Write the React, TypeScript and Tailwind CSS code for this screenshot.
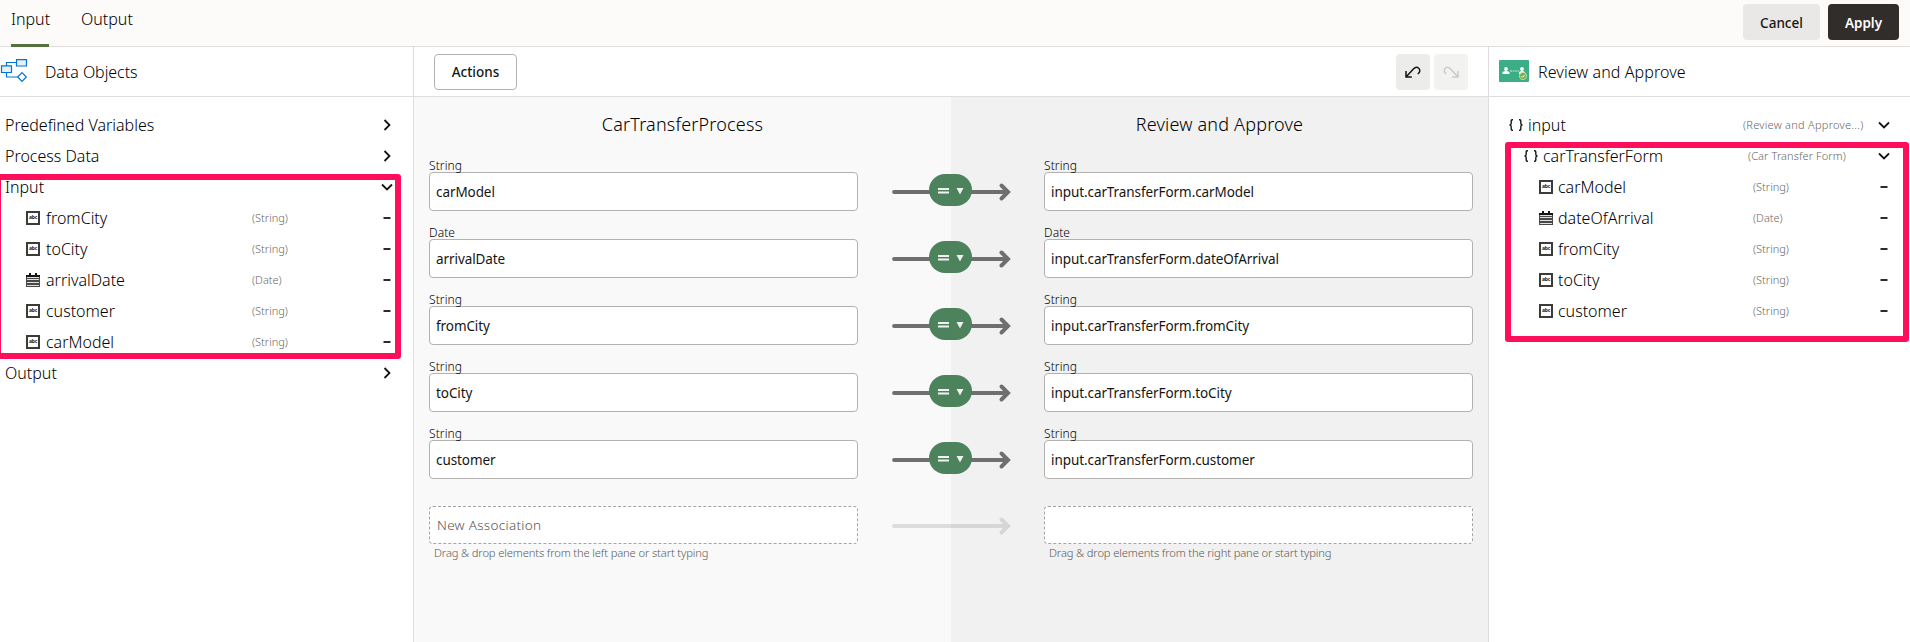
import React from "react";

type Kind = "text" | "date" | "object" | "none";
type Row = { name: string; type?: string; kind: Kind; state: "open" | "closed" | "leaf" };

const leftRows: Row[] = [
  { name: "Predefined Variables", kind: "none", state: "closed" },
  { name: "Process Data", kind: "none", state: "closed" },
  { name: "Input", kind: "none", state: "open" },
  { name: "fromCity", type: "(String)", kind: "text", state: "leaf" },
  { name: "toCity", type: "(String)", kind: "text", state: "leaf" },
  { name: "arrivalDate", type: "(Date)", kind: "date", state: "leaf" },
  { name: "customer", type: "(String)", kind: "text", state: "leaf" },
  { name: "carModel", type: "(String)", kind: "text", state: "leaf" },
  { name: "Output", kind: "none", state: "closed" },
];

const rightRows: (Row & { indent: string; typeWidth: string })[] = [
  { name: "input", type: "(Review and Approve...)", kind: "object", state: "open", indent: "pl-[20px]", typeWidth: "w-[134px] tracking-[0.26px]" },
  { name: "carTransferForm", type: "(Car Transfer Form)", kind: "object", state: "open", indent: "pl-[35px]", typeWidth: "w-[129px] tracking-[0.1px]" },
  { name: "carModel", type: "(String)", kind: "text", state: "leaf", indent: "pl-[50px]", typeWidth: "w-[124px]" },
  { name: "dateOfArrival", type: "(Date)", kind: "date", state: "leaf", indent: "pl-[50px]", typeWidth: "w-[124px]" },
  { name: "fromCity", type: "(String)", kind: "text", state: "leaf", indent: "pl-[50px]", typeWidth: "w-[124px]" },
  { name: "toCity", type: "(String)", kind: "text", state: "leaf", indent: "pl-[50px]", typeWidth: "w-[124px]" },
  { name: "customer", type: "(String)", kind: "text", state: "leaf", indent: "pl-[50px]", typeWidth: "w-[124px]" },
];

const associations = [
  { type: "String", from: "carModel", to: "input.carTransferForm.carModel" },
  { type: "Date", from: "arrivalDate", to: "input.carTransferForm.dateOfArrival" },
  { type: "String", from: "fromCity", to: "input.carTransferForm.fromCity" },
  { type: "String", from: "toCity", to: "input.carTransferForm.toCity" },
  { type: "String", from: "customer", to: "input.carTransferForm.customer" },
];

function StateIcon({ state }: { state: Row["state"] }) {
  return (
    <svg width="14" height="14" viewBox="0 0 14 14" fill="none" stroke="#161513" strokeWidth="1.8" className="shrink-0">
      {state === "open" && <path d="M2 4.5 7 9.5 12 4.5" />}
      {state === "closed" && <path d="M4.5 2 9.5 7 4.5 12" />}
      {state === "leaf" && <path d="M3.5 7H10.5" />}
    </svg>
  );
}

function KindIcon({ kind }: { kind: Kind }) {
  if (kind === "text")
    return (
      <span className="flex h-[14px] w-[14px] shrink-0 items-center justify-center border-2 border-[#3d3b39] bg-white">
        <span className="text-[5px] leading-[5px] font-bold tracking-[-0.2px] text-[#161513]">abc</span>
      </span>
    );
  if (kind === "date")
    return (
      <svg width="14" height="14" viewBox="0 0 14 14" className="shrink-0">
        <path d="M0 2H14V14H0Z" fill="#4a4846" />
        <path d="M0 2H14V4H0ZM3 0H5V3.5H3ZM9 0H11V3.5H9Z" fill="#161513" />
        <path d="M1 4.5H13M1 6.5H13M1 9.5H13M1 12.5H13" stroke="#e0e0e0" strokeWidth="1" />
      </svg>
    );
  if (kind === "object")
    return (
      <svg width="14" height="14" viewBox="0 0 14 14" fill="none" stroke="#161513" strokeWidth="1.4" className="shrink-0">
        <path d="M4 1.7H3.3Q2.2 1.7 2.2 2.9V5.2Q2.2 7 .5 7 2.2 7 2.2 8.8V11.1Q2.2 12.3 3.3 12.3H4M10 1.7H10.7Q11.8 1.7 11.8 2.9V5.2Q11.8 7 13.5 7 11.8 7 11.8 8.8V11.1Q11.8 12.3 10.7 12.3H10" />
      </svg>
    );
  return null;
}

function Arrow({ active }: { active: boolean }) {
  return (
    <div className={active ? "relative h-[32px] w-[118px]" : "relative h-[32px] w-[118px] opacity-20"}>
      <svg width="120" height="32" viewBox="0 0 120 32" fill="none" stroke="#6f6f6f" strokeWidth="4" strokeLinecap="round">
        <path d="M2 18H115" strokeWidth="3.8" />
        <path d="M109.5 11.5 116 18 109.5 24.5" />
      </svg>
      {active && (
        <button className="absolute top-0 left-[37px] h-[32px] w-[43px] rounded-[16px] bg-[#4c825c]">
          <svg width="43" height="32" viewBox="0 0 43 32" fill="#f1f1f1">
            <path d="M9 14H20V16H9ZM9 17.5H20V19.5H9ZM27.5 14H34.5L31 20.5Z" />
          </svg>
        </button>
      )}
    </div>
  );
}

function Field({ label, value }: { label: string; value: string }) {
  return (
    <div className="w-[429px]">
      <div className="h-[13px] text-[12px] leading-[13px] font-light tracking-[0.1px] text-black">{label}</div>
      <div className="flex h-[39px] items-center rounded-[4px] border border-[#b3b2b1] bg-white pt-[2px] pl-[6px] text-[13.5px] tracking-[-0.08px] text-[#161513]">
        {value}
      </div>
    </div>
  );
}

function NewField({ value, hint }: { value: string; hint: string }) {
  return (
    <div className="w-[429px]">
      <div className="flex h-[38px] items-center rounded-[4px] border border-dashed border-[#a5a4a3] bg-white pl-[7px] text-[13.5px] font-light tracking-[0.3px] text-[#555453]">
        {value}
      </div>
      <div className="pt-[1px] pl-[5px] text-[11.2px] leading-[15px] font-light tracking-[-0.13px] text-[#5a5958]">{hint}</div>
    </div>
  );
}

export default function App() {
  return (
    <div className="relative flex h-[642px] w-[1910px] flex-col overflow-hidden bg-white font-['Noto_Sans',sans-serif] text-[#161513]">
      <header className="flex h-[47px] justify-between border-b border-[#dfdedd] bg-[#fcfbfa] pl-[11px]">
        <nav className="flex gap-[32px] text-[16px] font-light text-black">
          <div className="-mb-px flex h-[47px] w-[38px] flex-col justify-between border-b-[3px] border-[#52713f] pt-[7px] whitespace-nowrap">Input</div>
          <div className="pt-[7px]">Output</div>
        </nav>
        <div className="flex gap-[8px] pt-[4px] pr-[11px] text-[13.5px] font-semibold">
          <button className="h-[36px] w-[77px] rounded-[4px] bg-[#e9e8e6] pt-[2px] font-medium">Cancel</button>
          <button className="h-[36px] w-[71px] rounded-[4px] bg-[#312d2a] pt-[2px] text-white">Apply</button>
        </div>
      </header>

      <div className="flex flex-1">
        <aside className="flex w-[414px] flex-col border-r border-[#dfdedd]">
          <div className="flex h-[50px] items-center border-b border-[#dfdedd] text-[16px] font-light tracking-[-0.05px] text-black">
            <svg width="28" height="25" viewBox="0 0 28 25" fill="#e5f1fa" stroke="#0572ce" strokeWidth="1.2">
              <path d="M6.5 6.5V3.5H16.5M6.5 13.5V18H17.5" fill="none" />
              <path d="M16.5 .6H26.5V7H16.5ZM1.5 6.8H11.5V13.5H1.5Z" />
              <path d="M22 13.7 26.3 18 22 22.3 17.7 18Z" fill="white" />
            </svg>
            <span className="ml-[17px]">Data Objects</span>
          </div>
          <div className="flex flex-col pt-[12px]">
            {leftRows.map((r) => (
              <div key={r.name} className={r.kind === "none" ? "flex h-[31px] items-center pr-[19px] pl-[5px]" : "flex h-[31px] items-center pr-[19px] pl-[26px]"}>
                <KindIcon kind={r.kind} />
                <span className={r.kind === "none" ? "flex-1 text-[16px] font-light text-black" : "ml-[6px] flex-1 text-[16px] font-light text-black"}>{r.name}</span>
                <span className="w-[128px] pt-[2px] text-[11px] font-light text-[#686765]">{r.type}</span>
                <StateIcon state={r.state} />
              </div>
            ))}
          </div>
        </aside>

        <main className="flex flex-1 flex-col">
          <div className="flex h-[50px] items-center justify-between border-b border-[#dfdedd] px-[20px]">
            <button className="h-[36px] w-[83px] rounded-[4px] border border-[#b3b2b1] pt-[2px] text-[13.5px] font-medium">Actions</button>
            <div className="flex gap-[4px]">
              <button className="flex h-[36px] w-[34px] items-center justify-center rounded-[4px] bg-[#ececea]">
                <svg width="16" height="12" viewBox="0 0 16 12" fill="none" stroke="#161513" strokeWidth="1.5">
                  <path d="M1 5V11H6.8M1 11 8.4 3.1C10.2 1.1 12.2.9 13.7 2.2 15.2 3.6 15 5.8 13.8 7L12.8 8" />
                </svg>
              </button>
              <button className="flex h-[36px] w-[34px] items-center justify-center rounded-[4px] bg-[#f2f2f1]">
                <svg width="16" height="12" viewBox="0 0 16 12" fill="none" stroke="#cbcac9" strokeWidth="1.5">
                  <path d="M15 5V11H9.2M15 11 7.6 3.1C5.8 1.1 3.8.9 2.3 2.2.8 3.6 1 5.8 2.2 7L3.2 8" />
                </svg>
              </button>
            </div>
          </div>
          <div className="flex flex-1 flex-col bg-[linear-gradient(to_right,#f9f9f9_50%,#f1f1f1_50%)]">
            <div className="flex h-[62px] text-center text-[18px] font-light tracking-[0.18px] text-black">
              <h2 className="flex-1 pt-[14px]">CarTransferProcess</h2>
              <h2 className="flex-1 pt-[14px]">Review and Approve</h2>
            </div>
            <div className="flex flex-col gap-[15px] px-[15px]">
              {associations.map((a) => (
                <div key={a.from} className="flex items-start justify-between">
                  <Field label={a.type} value={a.from} />
                  <div className="pt-[15px]"><Arrow active /></div>
                  <Field label={a.type} value={a.to} />
                </div>
              ))}
            </div>
            <div className="flex items-start justify-between px-[15px] pt-[27px]">
              <NewField value="New Association" hint="Drag & drop elements from the left pane or start typing" />
              <div className="pt-[2px]"><Arrow active={false} /></div>
              <NewField value="" hint="Drag & drop elements from the right pane or start typing" />
            </div>
          </div>
        </main>

        <aside className="flex w-[422px] flex-col border-l border-[#dfdedd]">
          <div className="flex h-[50px] items-center border-b border-[#dfdedd] pl-[10px] text-[16px] font-light tracking-[0.1px] text-black">
            <svg width="30" height="22" viewBox="0 0 30 22" className="-mt-[2px]">
              <rect width="30" height="22" rx="1" fill="#3bae86" />
              <path d="M3.5 14V12Q7 10 10.5 12V14ZM20 14V12Q23 10 26 12V14Z" fill="white" />
              <circle cx="7" cy="9" r="1.9" fill="white" />
              <circle cx="23" cy="9" r="1.9" fill="white" />
              <path d="M11 11H20" stroke="#c4e6da" strokeWidth="1.2" strokeDasharray="2 .6" />
              <circle cx="24" cy="16" r="3.6" fill="#6cb052" stroke="#c9dda8" strokeWidth=".9" />
              <path d="M22.3 16 23.6 17.3 25.8 14.8" stroke="white" fill="none" />
            </svg>
            <span className="ml-[9px]">Review and Approve</span>
          </div>
          <div className="flex flex-col pt-[12px]">
            {rightRows.map((r) => (
              <div key={r.name} className={`flex h-[31px] items-center pr-[19px] ${r.indent}`}>
                <KindIcon kind={r.kind} />
                <span className="ml-[5px] flex-1 text-[16px] font-light text-black">{r.name}</span>
                <span className={`pt-[2px] text-[11px] font-light whitespace-nowrap text-[#686765] ${r.typeWidth}`}>{r.type}</span>
                <StateIcon state={r.state} />
              </div>
            ))}
          </div>
        </aside>
      </div>

      <div className="absolute top-[174px] left-[-5px] h-[185px] w-[406px] rounded-[3px] border-[6px] border-[#ff0f5b]" />
      <div className="absolute top-[142px] left-[1505px] h-[200px] w-[404px] rounded-[3px] border-[6px] border-[#ff0f5b]" />
    </div>
  );
}
